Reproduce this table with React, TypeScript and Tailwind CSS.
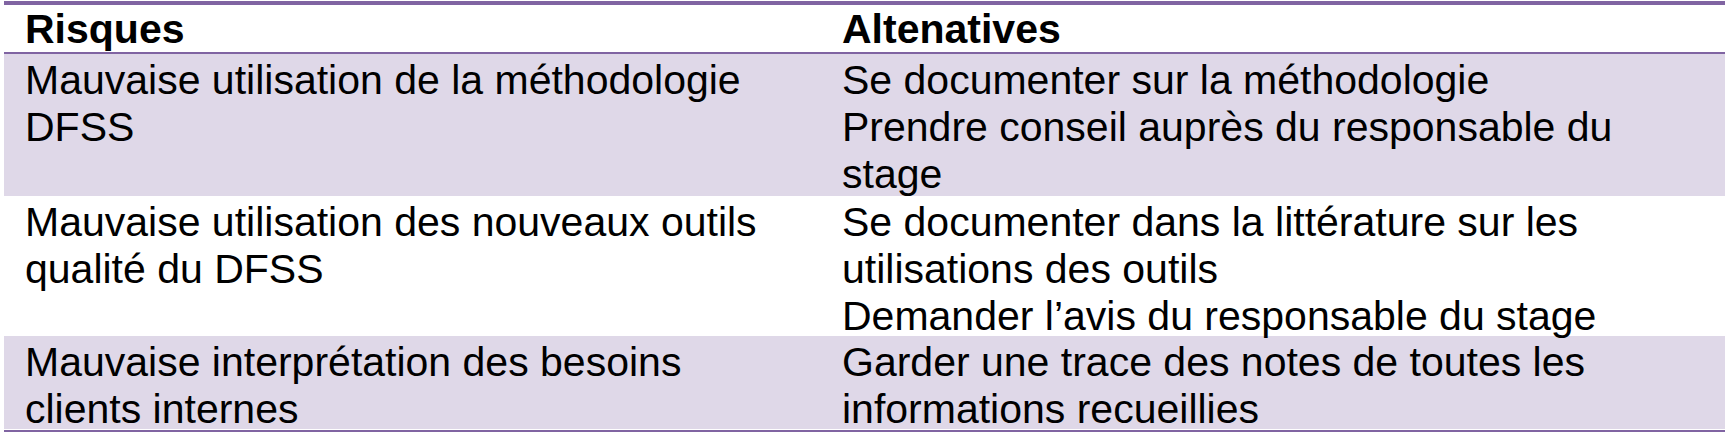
const rows: { risk: string[]; alts: string[]; shaded: boolean; height: string }[] = [
  {
    risk: ["Mauvaise utilisation de la méthodologie", "DFSS"],
    alts: ["Se documenter sur la méthodologie", "Prendre conseil auprès du responsable du", "stage"],
    shaded: true,
    height: "h-[142px]",
  },
  {
    risk: ["Mauvaise utilisation des nouveaux outils", "qualité du DFSS"],
    alts: [
      "Se documenter dans la littérature sur les",
      "utilisations des outils",
      "Demander l\u2019avis du responsable du stage",
    ],
    shaded: false,
    height: "h-[140px]",
  },
  {
    risk: ["Mauvaise interprétation des besoins", "clients internes"],
    alts: ["Garder une trace des notes de toutes les", "informations recueillies"],
    shaded: true,
    height: "h-[93px]",
  },
];

function Lines({ lines }: { lines: string[] }) {
  return (
    <>
      {lines.map((line) => (
        <div key={line} className="whitespace-nowrap">
          {line}
        </div>
      ))}
    </>
  );
}

export default function App() {
  return (
    <div className="h-[433px] w-[1729px] bg-white pt-[1px] pl-[4px] font-['Liberation_Sans',Arial,sans-serif] text-[41px] leading-[47px] text-black">
      <div className="w-[1721px] border-t-[4px] border-[#8064a2]">
        <div className="grid h-[49px] grid-cols-[817px_1fr] border-b-[2px] border-[#8064a2] pt-[1px] font-bold">
          <div className="pl-[21px]">Risques</div>
          <div className="pl-[21px]">Altenatives</div>
        </div>

        {rows.map((row) => (
          <div
            key={row.risk[0]}
            className={`grid grid-cols-[817px_1fr] pt-[3px] ${row.height} ${row.shaded ? "bg-[#dfd8e8]" : "bg-white"}`}
          >
            <div className="pl-[21px]">
              <Lines lines={row.risk} />
            </div>
            <div className="pl-[21px]">
              <Lines lines={row.alts} />
            </div>
          </div>
        ))}

        <div className="h-[1px] bg-white" />
        <div className="h-[2px] bg-[#8064a2]" />
      </div>
    </div>
  );
}
